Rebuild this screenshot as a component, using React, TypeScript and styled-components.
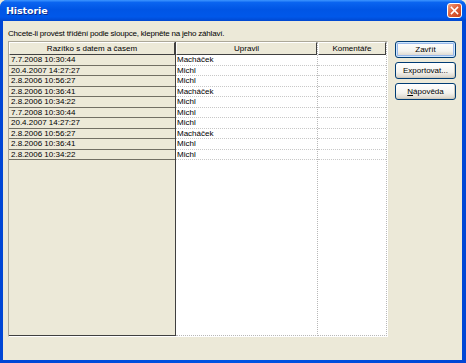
import styled, { createGlobalStyle } from "styled-components";

const Global = createGlobalStyle`
    html, body {
        margin: 0;
        padding: 0;
        background: #ECE9D8;
    }
    body {
        font-family: "Liberation Sans", Arial, sans-serif;
    }
`;

const Win = styled.div`
    width: 466px;
    height: 363px;
    display: flex;
    flex-direction: column;
    overflow: hidden;
    border-radius: 7px 7px 0 0;
    background: #0054E3;
`;

const TitleBar = styled.div`
    height: 21px;
    flex: none;
    display: flex;
    align-items: center;
    justify-content: space-between;
    padding: 0 4px 0 6px;
    background: linear-gradient(#3D95FF 0%, #0A64F0 12%, #0055E5 45%, #0058EA 80%, #0047CF 100%);
`;

const Title = styled.div`
    color: white;
    font-family: "DejaVu Sans", "Liberation Sans", sans-serif;
    font-weight: bold;
    font-size: 9.5px;
    letter-spacing: -0.1px;
    text-shadow: 1px 1px 0 #0A2A8A;
`;

const CloseBtn = styled.div`
    width: 15px;
    height: 15px;
    box-sizing: border-box;
    border: 1px solid #fff;
    border-radius: 3px;
    background: linear-gradient(135deg, #F0A080 0%, #E0623C 45%, #C4401A 100%);
    display: flex;
    align-items: center;
    justify-content: center;
`;

const Frame = styled.div`
    flex: 1;
    display: flex;
    padding: 0 4px 3px 3px;
    background: linear-gradient(90deg, #0046D5, #0054E3 50%, #0046D5);
`;

const Client = styled.div`
    flex: 1;
    background: #ECE9D8;
    padding: 6px 6px 0 5px;
    display: flex;
    flex-direction: column;
    font-size: 8px;
    color: #000;
`;

const Hint = styled.div`
    height: 9px;
    line-height: 9px;
    margin: 2px 0 3px;
    letter-spacing: -0.2px;
`;

const Body = styled.div`
    display: flex;
    gap: 7px;
`;

const Grid = styled.div`
    width: 380px;
    height: 296px;
    box-sizing: border-box;
    border: 1px solid #fff;
    border-top-color: #ACA899;
    border-left-color: #ACA899;
    display: grid;
    grid-template-columns: 167px 142px 69px;
`;

const Column = styled.div<{ $fixed?: boolean }>`
    display: flex;
    flex-direction: column;
    background: ${(p) => (p.$fixed ? "#ECE9D8" : "#fff")};
    border-right: ${(p) => (p.$fixed ? "1px solid #404040" : "1px dotted #B8B8B8")};
    border-bottom: ${(p) => (p.$fixed ? "1px solid #404040" : "1px dotted #B8B8B8")};
`;

const Head = styled.div`
    height: 13px;
    box-sizing: border-box;
    flex: none;
    background: #ECE9D8;
    text-align: center;
    line-height: 11px;
    border-top: 1px solid #fff;
    border-left: 1px solid #fff;
    border-bottom: 1px solid #404040;
    border-right: 1px solid #404040;
`;

const Cell = styled.div<{ $fixed?: boolean }>`
    height: 10.5px;
    box-sizing: border-box;
    flex: none;
    line-height: 10px;
    padding-left: ${(p) => (p.$fixed ? "2px" : "1px")};
    white-space: nowrap;
    overflow: hidden;
    border-bottom: ${(p) => (p.$fixed ? "1px solid #716F64" : "1px dotted #C8C8C8")};
    &:last-of-type {
        border-bottom: none;
    }
`;

const Filler = styled.div`
    flex: 1;
`;

const Buttons = styled.div`
    display: flex;
    flex-direction: column;
    gap: 4px;
`;

const Button = styled.div<{ $default?: boolean }>`
    width: 61px;
    height: 17px;
    box-sizing: border-box;
    border: 1px solid #003C74;
    border-radius: 3px;
    display: flex;
    align-items: center;
    justify-content: center;
    background: linear-gradient(#FFFFFF 0%, #F4F3EE 60%, #D6D0C5 100%);
    box-shadow: ${(p) =>
        p.$default
            ? "inset 0 0 0 1px #CEE7FF, inset 0 0 0 2px #98B8EA"
            : "inset -1px -1px 0 #D0CBBE"};
`;

const Key = styled.span`
    text-decoration: underline;
`;

const rows = [
    ["7.7.2008 10:30:44", "Macháček"],
    ["20.4.2007 14:27:27", "Michl"],
    ["2.8.2006 10:56:27", "Michl"],
    ["2.8.2006 10:36:41", "Macháček"],
    ["2.8.2006 10:34:22", "Michl"],
    ["7.7.2008 10:30:44", "Michl"],
    ["20.4.2007 14:27:27", "Michl"],
    ["2.8.2006 10:56:27", "Macháček"],
    ["2.8.2006 10:36:41", "Michl"],
    ["2.8.2006 10:34:22", "Michl"],
];

function App() {
    return (
        <>
            <Global />
            <Win>
                <TitleBar>
                    <Title>Historie</Title>
                    <CloseBtn>
                        <svg width="9" height="9" viewBox="0 0 9 9">
                            <path d="M1.5 1.5 L7.5 7.5 M7.5 1.5 L1.5 7.5" stroke="#fff" strokeWidth="1.6" strokeLinecap="square" />
                        </svg>
                    </CloseBtn>
                </TitleBar>
                <Frame>
                    <Client>
                        <Hint>Chcete-li provést třídění podle sloupce, klepněte na jeho záhlaví.</Hint>
                        <Body>
                            <Grid>
                                <Column $fixed>
                                    <Head>Razítko s datem a časem</Head>
                                    {rows.map((r, i) => (
                                        <Cell $fixed key={i}>{r[0]}</Cell>
                                    ))}
                                    <Filler />
                                </Column>
                                <Column>
                                    <Head>Upravil</Head>
                                    {rows.map((r, i) => (
                                        <Cell key={i}>{r[1]}</Cell>
                                    ))}
                                    <Filler />
                                </Column>
                                <Column>
                                    <Head>Komentáře</Head>
                                    {rows.map((_, i) => (
                                        <Cell key={i}></Cell>
                                    ))}
                                    <Filler />
                                </Column>
                            </Grid>
                            <Buttons>
                                <Button $default>Zavřít</Button>
                                <Button>Exportovat...</Button>
                                <Button><span><Key>N</Key>ápověda</span></Button>
                            </Buttons>
                        </Body>
                    </Client>
                </Frame>
            </Win>
        </>
    );
}

export default App;
